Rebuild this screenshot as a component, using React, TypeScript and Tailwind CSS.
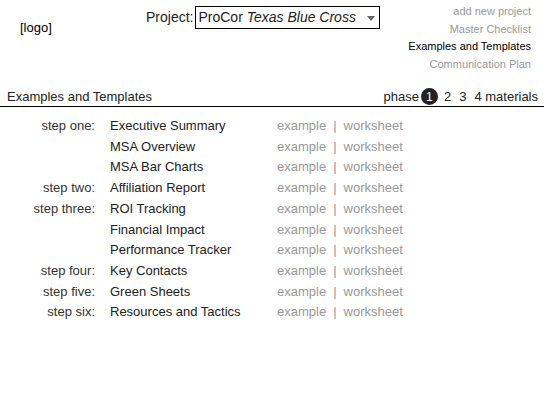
import React from 'react';

type Row = { step?: string; title: string };

const rows: Row[] = [
  { step: 'step one:', title: 'Executive Summary' },
  { title: 'MSA Overview' },
  { title: 'MSA Bar Charts' },
  { step: 'step two:', title: 'Affiliation Report' },
  { step: 'step three:', title: 'ROI Tracking' },
  { title: 'Financial Impact' },
  { title: 'Performance Tracker' },
  { step: 'step four:', title: 'Key Contacts' },
  { step: 'step five:', title: 'Green Sheets' },
  { step: 'step six:', title: 'Resources and Tactics' },
];

const navLinks = [
  { label: 'add new project', active: false },
  { label: 'Master Checklist', active: false },
  { label: 'Examples and Templates', active: true },
  { label: 'Communication Plan', active: false },
];

const App: React.FC = () => {
  return (
    <div
      className="w-[550px] h-[400px] bg-white text-[#222] overflow-hidden"
      style={{ fontFamily: '"Liberation Sans", Arial, sans-serif' }}
    >
      {/* header */}
      <div className="flex h-[87px]">
        <div className="w-[146px] pl-5 pt-[19px] text-[13px] leading-[18px] text-black">[logo]</div>
        <div className="flex items-start pt-[6px]">
          <span className="text-[14px] leading-[22px] mr-[2px]">Project:</span>
          <div className="w-[185px] h-[23px] border border-black flex items-center pl-[2px] pr-[4px] text-[14px]">
            <span>
              ProCor <i>Texas Blue Cross</i>
            </span>
            <span className="ml-auto w-0 h-0 border-l-[4px] border-r-[4px] border-t-[5px] border-l-transparent border-r-transparent border-t-[#666] mt-[1px]" />
          </div>
        </div>
        <div className="flex-1 flex flex-col items-end pr-[19px] pt-[3px] text-[11px] leading-[17.7px]">
          {navLinks.map((l) => (
            <span key={l.label} className={l.active ? 'text-black' : 'text-[#999]'}>
              {l.label}
            </span>
          ))}
        </div>
      </div>

      {/* section bar */}
      <div className="w-[544px] flex items-center justify-between border-b-[1.5px] border-black pl-[7px] pr-[6px] h-[20px] text-[13px]">
        <span>Examples and Templates</span>
        <div className="flex items-center">
          <span>phase</span>
          <span className="ml-[2px] w-[17px] h-[17px] rounded-full bg-[#222] text-white flex items-center justify-center text-[12px]">
            1
          </span>
          <span className="ml-[6px]">2</span>
          <span className="ml-[8px]">3</span>
          <span className="ml-[8px]">4 materials</span>
        </div>
      </div>

      {/* list */}
      <div className="pt-[9px]">
        {rows.map((r) => (
          <div key={r.title} className="flex text-[13px] leading-[20.7px]">
            <span className="w-[95px] text-right text-[#333]">{r.step ?? ''}</span>
            <span className="ml-[15px] w-[167px] text-[#222]">{r.title}</span>
            <span className="text-[#999]">
              example<span className="mx-[7px]">|</span>worksheet
            </span>
          </div>
        ))}
      </div>
    </div>
  );
};

export default App;
